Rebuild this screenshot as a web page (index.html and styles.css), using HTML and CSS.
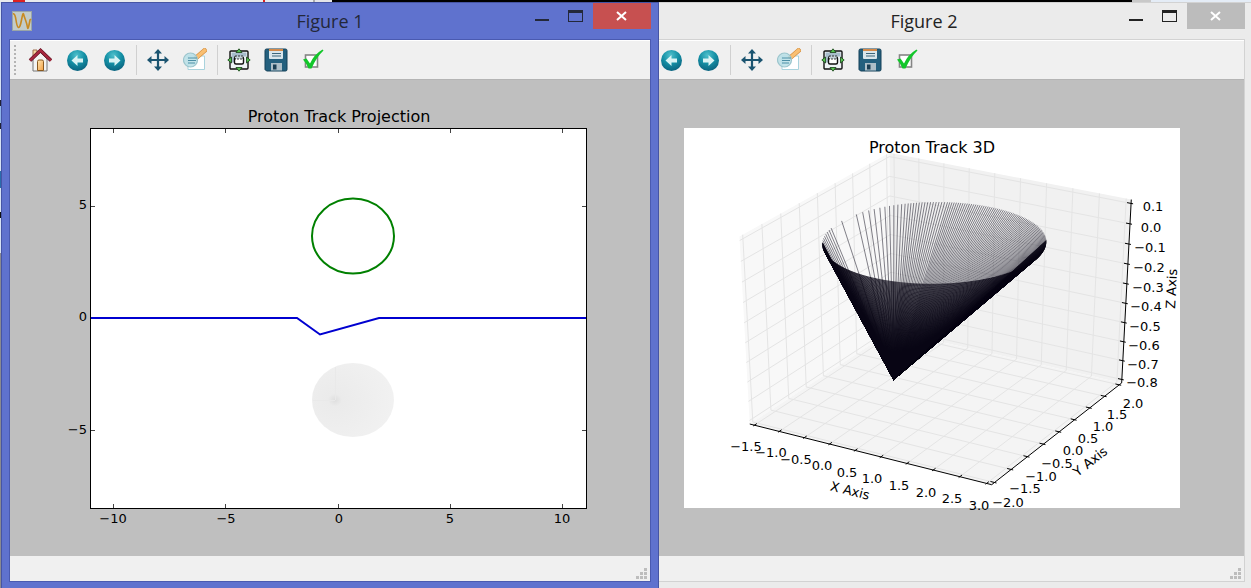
FILE: index.html
```html
<!DOCTYPE html>
<html lang="en">
<head>
  <meta charset="UTF-8">
  <title>Proton Track</title>
  <link rel="stylesheet" href="styles.css">
</head>
<body>
  <svg class="sprite" aria-hidden="true">
    <defs>
      <radialGradient id="ball" cx="45%" cy="25%" r="75%">
        <stop offset="0" stop-color="#4fc0cc"/>
        <stop offset="0.5" stop-color="#1591a6"/>
        <stop offset="1" stop-color="#0a6480"/>
      </radialGradient>
      <linearGradient id="door" x1="0" y1="0" x2="1" y2="1">
        <stop offset="0" stop-color="#ffe9b8"/>
        <stop offset="1" stop-color="#f5a040"/>
      </linearGradient>
      <radialGradient id="shade" cx="28%" cy="50%" r="70%" fx="28%" fy="50%">
        <stop offset="0" stop-color="#dedede"/>
        <stop offset="0.12" stop-color="#ebebeb"/>
        <stop offset="1" stop-color="#f1f1f1"/>
      </radialGradient>
    </defs>
    <symbol id="i-home" viewBox="0 0 24 24">
      <path d="M5 2h4v7H5z" fill="#f6d9a0" stroke="#a07050"/>
      <path d="M5 11l7-7 7 7v12H5z" fill="#f4f4f2" stroke="#777"/>
      <path d="M9.500 22.500v-9q0-1.500 1.500-1.500h3q1.500 0 1.500 1.500v9z" fill="url(#door)" stroke="#8a5a20"/>
      <path d="M2 12.500L12.500 2.500 23 12.500" fill="none" stroke="#5f1020" stroke-width="3.600"/>
      <path d="M2 12.500L12.500 2.500 23 12.500" fill="none" stroke="#a8283e" stroke-width="2.400"/>
    </symbol>
    <symbol id="i-back" viewBox="0 0 24 24">
      <circle cx="12.500" cy="12.500" r="10.500" fill="url(#ball)"/>
      <path d="M6.500 12.500l6-5.500v3.500h5.500v4h-5.500v3.500z" fill="#d9f3f4"/>
    </symbol>
    <symbol id="i-forward" viewBox="0 0 24 24">
      <circle cx="12.500" cy="12.500" r="10.500" fill="url(#ball)"/>
      <path d="M18.500 12.500l-6-5.500v3.500H7v4h5.500v3.500z" fill="#d9f3f4"/>
    </symbol>
    <symbol id="i-pan" viewBox="0 0 24 24">
      <path d="M12 3v18M3 12h18" stroke="#1b5470" stroke-width="2.200"/>
      <path d="M12 1l4 4.500H8zM12 23l4-4.500H8zM1 12l4.500-4v8zM23 12l-4.500-4v8z" fill="#1b5470"/>
    </symbol>
    <symbol id="i-zoom" viewBox="0 0 24 24">
      <path d="M5 8h16.500v13.500H5z" fill="#fff" stroke="#a9d3dd"/>
      <path d="M14 9l7.500-6.500" stroke="#d08a3a" stroke-width="4.600" stroke-linecap="square"/>
      <path d="M14 9l7.500-6.500" stroke="#f9bf72" stroke-width="3.400" stroke-linecap="square"/>
      <circle cx="7.500" cy="12" r="7" fill="#b9dfe6" fill-opacity=".85" stroke="#9cc5cd" stroke-width="1.200"/>
      <path d="M5 10h9M5 12.500h8M5 15h7" stroke="#4c8fa6" stroke-width="1.200"/>
    </symbol>
    <symbol id="i-subplots" viewBox="0 0 24 24">
      <rect x="3" y="3" width="18" height="18" rx="1" fill="#eef3f6" stroke="#111" stroke-width="1.400"/>
      <path d="M4.500 4.500h15v4h-15zM4.500 8.500h3v6h-3z" fill="#a7bccb"/>
      <rect x="7.500" y="9" width="9" height="7" rx="1.500" fill="#fff" stroke="#111" stroke-width="1.400"/>
      <path d="M8 8h8v3H8z" fill="#c3d0d8" stroke="#111" stroke-width=".8" stroke-dasharray="2 1"/>
      <path d="M12 .8l3 3.700H9zM12 23.200l3-3.700H9zM.8 12l3.700-3v6zM23.200 12l-3.700-3v6z" fill="#57c452" stroke="#143d14" stroke-width=".8"/>
    </symbol>
    <symbol id="i-save" viewBox="0 0 24 24">
      <path d="M1 2.500Q1 1 2.500 1h19Q23 1 23 2.500v19q0 1.500-1.500 1.500H2.500L1 21.500z" fill="#24607e" stroke="#154058"/>
      <path d="M5 1.500h14V10q0 1-1 1H6q-1 0-1-1z" fill="#d9e6ec"/>
      <path d="M5 1h14v2H5z" fill="#d38a4a"/>
      <path d="M8 5.500h9M8 8h9" stroke="#3d667a" stroke-width="1.200"/>
      <path d="M7 15h11v7.500H7z" fill="#aebfc8"/>
      <path d="M9 16.500h3.500v5H9z" fill="#1b3f54"/>
    </symbol>
    <symbol id="i-check" viewBox="0 0 24 24">
      <rect x="4.500" y="7" width="12" height="12" fill="#fff" stroke="#858585" stroke-width="1.600"/>
      <path d="M2 11.500l3.500-1 3.500 5Q13 6.500 21.500 1.500l1 1Q15.500 9 10.500 20.500H7.500Q5.500 15.500 2 11.500z" fill="#12c62a"/>
    </symbol>
    <symbol id="i-min" viewBox="0 0 16 16"><path d="M1 11h14v2H1z" fill="currentColor"/></symbol>
    <symbol id="i-max" viewBox="0 0 16 16"><path d="M0 2h15v12H0zM1 5v8h13V5z" fill="currentColor" fill-rule="evenodd"/></symbol>
    <symbol id="i-close" viewBox="0 0 16 16"><path d="M3 4l9 8M12 4l-9 8" fill="none" stroke="currentColor" stroke-width="2"/></symbol>
  </svg>

  <div class="desktop">
    <section class="window active" aria-label="Figure 1">
      <header class="titlebar">
        <svg class="app-icon" viewBox="0 0 20 20" aria-hidden="true">
          <rect x=".5" y=".5" width="19" height="19" fill="#c3ccc8" stroke="#9aa5a8"/>
          <path d="M1 3q2-1 3 6t2.500 7.500T9.500 9t2-6 2 6 2 7.500T18 9l1-1" fill="none" stroke="#c88a20" stroke-width="1.600"/>
        </svg>
        <h1>Figure 1</h1>
        <div class="controls">
          <button class="ctl" aria-label="Minimize"><svg><use href="#i-min"/></svg></button>
          <button class="ctl" aria-label="Maximize"><svg><use href="#i-max"/></svg></button>
          <button class="ctl close" aria-label="Close"><svg><use href="#i-close"/></svg></button>
        </div>
      </header>
      <div class="content">
        <div class="toolbar">
          <span class="handle"></span>
          <button class="tool" aria-label="Home"><svg><use href="#i-home"/></svg></button>
          <button class="tool" aria-label="Back"><svg><use href="#i-back"/></svg></button>
          <button class="tool" aria-label="Forward"><svg><use href="#i-forward"/></svg></button>
          <span class="sep"></span>
          <button class="tool" aria-label="Pan"><svg><use href="#i-pan"/></svg></button>
          <button class="tool" aria-label="Zoom"><svg><use href="#i-zoom"/></svg></button>
          <span class="sep"></span>
          <button class="tool" aria-label="Subplots"><svg><use href="#i-subplots"/></svg></button>
          <button class="tool" aria-label="Save"><svg><use href="#i-save"/></svg></button>
          <button class="tool" aria-label="Customize"><svg><use href="#i-check"/></svg></button>
        </div>
        <svg class="plot" viewBox="0 0 640 476">
          <rect x="80.500" y="48.500" width="496" height="380" fill="#fff" stroke="#000"/>
          <path class="ticks" d="M103.500 428v-4M215.500 428v-4M328.500 428v-4M440.500 428v-4M552.500 428v-4M103.500 49v4M215.500 49v4M328.500 49v4M440.500 49v4M552.500 49v4M81 126.500h4M81 238.500h4M81 350.500h4M576 126.500h-4M576 238.500h-4M576 350.500h-4"/>
          <ellipse cx="343" cy="320" rx="41" ry="37" fill="url(#shade)"/>
          <path d="M303 320.500h22M325.500 287v33" stroke="#e9e9e9"/>
          <ellipse cx="343" cy="156" rx="41" ry="37.500" fill="none" stroke="#008000" stroke-width="2"/>
          <path d="M81 238H287L310 254.500 369 238H576" fill="none" stroke="#0000d0" stroke-width="2"/>
          <text class="title" x="329" y="42">Proton Track Projection</text>
          <g class="labels">
            <text x="103" y="443">−10</text>
            <text x="216" y="443">−5</text>
            <text x="329" y="443">0</text>
            <text x="440" y="443">5</text>
            <text x="552" y="443">10</text>
          </g>
          <g class="labels end">
            <text x="77" y="129">5</text>
            <text x="77" y="241">0</text>
            <text x="77" y="354">−5</text>
          </g>
        </svg>
        <footer class="statusbar">
          <svg class="grip" viewBox="0 0 11 11" aria-hidden="true"><path d="M8 0h3v3H8zM4 4h3v3H4zM8 4h3v3H8zM0 8h3v3H0zM4 8h3v3H4zM8 8h3v3H8z"/></svg>
        </footer>
      </div>
    </section>

    <section class="window behind" aria-label="Figure 2">
      <header class="titlebar">
        <svg class="app-icon" viewBox="0 0 20 20" aria-hidden="true">
          <rect x=".5" y=".5" width="19" height="19" fill="#c3ccc8" stroke="#9aa5a8"/>
          <path d="M1 3q2-1 3 6t2.500 7.500T9.500 9t2-6 2 6 2 7.500T18 9l1-1" fill="none" stroke="#c88a20" stroke-width="1.600"/>
        </svg>
        <h1>Figure 2</h1>
        <div class="controls">
          <button class="ctl" aria-label="Minimize"><svg><use href="#i-min"/></svg></button>
          <button class="ctl" aria-label="Maximize"><svg><use href="#i-max"/></svg></button>
          <button class="ctl close" aria-label="Close"><svg><use href="#i-close"/></svg></button>
        </div>
      </header>
      <div class="content">
        <div class="toolbar">
          <span class="handle"></span>
          <button class="tool" aria-label="Home"><svg><use href="#i-home"/></svg></button>
          <button class="tool" aria-label="Back"><svg><use href="#i-back"/></svg></button>
          <button class="tool" aria-label="Forward"><svg><use href="#i-forward"/></svg></button>
          <span class="sep"></span>
          <button class="tool" aria-label="Pan"><svg><use href="#i-pan"/></svg></button>
          <button class="tool" aria-label="Zoom"><svg><use href="#i-zoom"/></svg></button>
          <span class="sep"></span>
          <button class="tool" aria-label="Subplots"><svg><use href="#i-subplots"/></svg></button>
          <button class="tool" aria-label="Save"><svg><use href="#i-save"/></svg></button>
          <button class="tool" aria-label="Customize"><svg><use href="#i-check"/></svg></button>
        </div>
        <svg class="plot" viewBox="0 0 640 476">
          <rect x="80" y="48" width="496" height="380" fill="#fff"/>
          <g id="scene"></g>
          <text class="title" x="328" y="73">Proton Track 3D</text>
          <g class="labels">
            <text x="142" y="371">−1.5</text>
            <text x="167" y="377">−1.0</text>
            <text x="192" y="384">−0.5</text>
            <text x="218" y="390">0.0</text>
            <text x="243" y="397">0.5</text>
            <text x="268" y="403">1.0</text>
            <text x="295" y="410">1.5</text>
            <text x="322" y="417">2.0</text>
            <text x="348" y="423">2.5</text>
            <text x="375" y="430">3.0</text>
          </g>
          <g class="labels">
            <text x="404" y="427">−2.0</text>
            <text x="421" y="413">−1.5</text>
            <text x="437" y="401">−1.0</text>
            <text x="453" y="388">−0.5</text>
            <text x="469" y="375">0.0</text>
            <text x="484" y="363">0.5</text>
            <text x="499" y="351">1.0</text>
            <text x="513" y="339">1.5</text>
            <text x="529" y="328">2.0</text>
          </g>
          <g class="labels">
            <text x="549" y="131">0.1</text>
            <text x="547" y="152">0.0</text>
            <text x="546" y="172">−0.1</text>
            <text x="545" y="192">−0.2</text>
            <text x="544" y="212">−0.3</text>
            <text x="542" y="231">−0.4</text>
            <text x="541" y="251">−0.5</text>
            <text x="540" y="270">−0.6</text>
            <text x="539" y="289">−0.7</text>
            <text x="538" y="307">−0.8</text>
          </g>
          <g class="labels">
            <text transform="translate(245 415) rotate(14)">X Axis</text>
            <text transform="translate(489 385) rotate(-38)">Y Axis</text>
            <text transform="translate(572 209) rotate(-87)">Z Axis</text>
          </g>
        </svg>
        <footer class="statusbar">
          <svg class="grip" viewBox="0 0 11 11" aria-hidden="true"><path d="M8 0h3v3H8zM4 4h3v3H4zM8 4h3v3H8zM0 8h3v3H0zM4 8h3v3H4zM8 8h3v3H8z"/></svg>
        </footer>
      </div>
    </section>
  </div>

  <script src="script.js"></script>
</body>
</html>
```
FILE: styles.css
```css
body {
  margin: 0;
  font-family: "Open Sans", "Noto Sans", sans-serif;
}
.sprite {
  position: absolute;
  width: 0;
  height: 0;
}
.desktop {
  display: flex;
  box-sizing: border-box;
  height: 100vh;
  padding: 2px 0 0 1px;
  overflow: hidden;
  background:
    linear-gradient(90deg, #e8eaee 0 1%, #d22 1% 2%, #e8eaee 2% 21%, #d22 21% 21.2%, #e8eaee 21.2% 25%, #aaa 25% 25.2%, #e4e4e8 25.2% 26.5%, #000 26.5% 90.5%, #c8c8c8 90.5% 92%, #e4ecf6 92%) top / 100% 2px no-repeat,
    linear-gradient(#d6e2f4 0 17%, #223 17% 18%, #8fb4e8 18% 21%, #223 21% 22%, #d6e2f4 22% 29%, #2a6cab 29% 32%, #d6e2f4 32% 36%, #111 36% 37%, #d6e2f4 37% 43%, #8a8a90 43%) left / 1px 100% no-repeat;
}

/* windows */
.window {
  flex: 1 0 0;
  min-width: 0;
  display: flex;
  flex-direction: column;
  border: 1px solid;
  border-bottom: 0;
  padding: 0 7px 6px;
}
.active {
  position: relative;
  z-index: 1;
  background: #5f72ce;
  border-color: #4655a5;
  color: #23283a;
}
.behind {
  margin: 0 -2px 0 -64px;
  background: #ebebeb;
  border-color: #d2d2d2;
  color: #222;
}
.titlebar {
  display: grid;
  grid-template-columns: 1fr auto 1fr;
  height: 36px;
}
.titlebar h1 {
  margin: 0;
  font-size: 18px;
  font-weight: 400;
  line-height: 36px;
}
.app-icon {
  width: 20px;
  height: 20px;
  margin: 8px 3px;
}
.controls {
  display: flex;
  justify-content: flex-end;
}
.ctl {
  width: 34px;
  height: 26px;
  padding: 0;
  border: 0;
  background: none;
  color: inherit;
}
.ctl svg {
  display: block;
  width: 16px;
  height: 16px;
  margin: 0 auto;
}
.ctl.close {
  width: 58px;
  color: #fff;
  background: #c75050;
}
.behind .close {
  background: #bcbcbc;
}
.content {
  flex: 1;
  min-height: 0;
  display: flex;
  flex-direction: column;
  border: 1px solid #4a5ab0;
  background: #f0f0f0;
}
.behind .content {
  border-color: #d2d2d2;
}

/* toolbar */
.toolbar {
  display: flex;
  box-sizing: border-box;
  height: 40px;
  border-top: 1px solid #fff;
  border-bottom: 1px solid #b4b4b4;
}
.handle {
  width: 2px;
  margin: 4px 5px 4px 4px;
  background: repeating-linear-gradient(#b4b4b4 0 2px, transparent 2px 4px);
}
.tool {
  width: 37px;
  padding: 0;
  border: 0;
  background: none;
}
.tool svg {
  display: block;
  width: 24px;
  height: 24px;
  margin: 0 auto;
}
.sep {
  width: 1px;
  margin: 4px 2px 4px 4px;
  background: #d0d0d0;
}

/* figures */
.plot {
  flex: 1;
  min-height: 0;
  width: 100%;
  background: #bfbfbf;
  font-family: "DejaVu Sans", sans-serif;
}
.title {
  font-size: 16px;
  text-anchor: middle;
}
.labels {
  font-size: 13px;
  text-anchor: middle;
}
.labels.end {
  text-anchor: end;
}
.ticks {
  stroke: #444;
}
.axis {
  fill: none;
  stroke: #000;
}
.grid {
  fill: none;
  stroke: #e4e4e4;
}
.back-lines {
  fill: none;
  stroke: #0a0818;
  stroke-opacity: .5;
}
.front-lines {
  fill: none;
  stroke: #080614;
  stroke-opacity: .75;
}

.statusbar {
  display: flex;
  justify-content: flex-end;
  align-items: flex-end;
  box-sizing: border-box;
  height: 25px;
  padding: 2px 3px;
}
.grip {
  width: 11px;
  height: 11px;
  fill: #bdbdbd;
}
```
FILE: script.js
```javascript
const scene = document.getElementById("scene");
const lim = { x: [-1.5, 3], y: [-2, 2], z: [-0.8, 0.1] };
const pad = 1 / 48;
const lo = -pad;
const hi = 1 + pad;

// unit cube -> figure, camera at azimuth -60, elevation 30, distance 10
function project(x, y, z) {
  const a = x - 0.5, b = y - 0.5, c = z - 0.5;
  const depth = 10 - (0.433 * a - 0.75 * b + 0.5 * c);
  const u = (0.866 * a + 0.5 * b) / depth;
  const v = (-0.25 * a + 0.433 * b + 0.866 * c) / depth;
  return [80 + (u + 0.095) / 0.185 * 496, 428 - (v + 0.095) / 0.185 * 380];
}

function norm(axis, value) {
  return (value - lim[axis][0]) / (lim[axis][1] - lim[axis][0]);
}

function line(...points) {
  return "M" + points.map(p => project(...p).map(n => n.toFixed(2)).join(" ")).join("L");
}

function add(d, cls, fill) {
  const path = document.createElementNS("http://www.w3.org/2000/svg", "path");
  path.setAttribute("d", d);
  if (cls) path.setAttribute("class", cls);
  if (fill) path.setAttribute("fill", fill);
  scene.appendChild(path);
}

// panes
add(line([lo, lo, lo], [lo, hi, lo], [lo, hi, hi], [lo, lo, hi]) + "Z", "", "#f8f8f8");
add(line([lo, hi, lo], [hi, hi, lo], [hi, hi, hi], [lo, hi, hi]) + "Z", "", "#f1f1f1");
add(line([lo, lo, lo], [hi, lo, lo], [hi, hi, lo], [lo, hi, lo]) + "Z", "", "#f4f4f4");

// grid and ticks
let grid = "";
let axes = line([lo, lo, lo], [hi, lo, lo], [hi, hi, lo], [hi, hi, hi]);
const out = 1 / 120;
const inn = 1 / 60;
for (let i = 0; i <= 9; i++) {
  const t = i / 9;
  grid += line([t, lo, lo], [t, hi, lo], [t, hi, hi]);
  grid += line([lo, lo, t], [lo, hi, t], [hi, hi, t]);
  axes += line([t, lo - out, lo], [t, lo + inn, lo]);
  axes += line([hi - inn, hi, t], [hi + out, hi, t]);
}
for (let i = 0; i <= 8; i++) {
  const t = i / 8;
  grid += line([hi, t, lo], [lo, t, lo], [lo, t, hi]);
  axes += line([hi - inn, t, lo], [hi + out, t, lo]);
}
add(grid, "grid");
add(axes, "axis");

// cone
const apex = [norm("x", -0.15), 0.5, norm("z", -0.75)];
function ray(deg) {
  const t = deg * Math.PI / 180;
  return line([norm("x", 0.67 + 1.83 * Math.cos(t)), norm("y", 1.67 * Math.sin(t)), norm("z", 0)], apex);
}

// one path per ray, so that the translucent strokes build up near the apex
[208, 205, 202, 199, 196, 193, 190, 178.5, 166.5, 162, 158, 154.5, 151, 148, 145.3, 142.8, 140.5, 138.4, 136.5]
  .forEach(a => add(ray(a), "back-lines"));
for (let a = 134.8; a > 31; a -= a > 115 ? 1.5 : 1.2) add(ray(a), "back-lines");
for (let a = 211; a <= 391; a += 0.5) add(ray(a), "front-lines");
```
